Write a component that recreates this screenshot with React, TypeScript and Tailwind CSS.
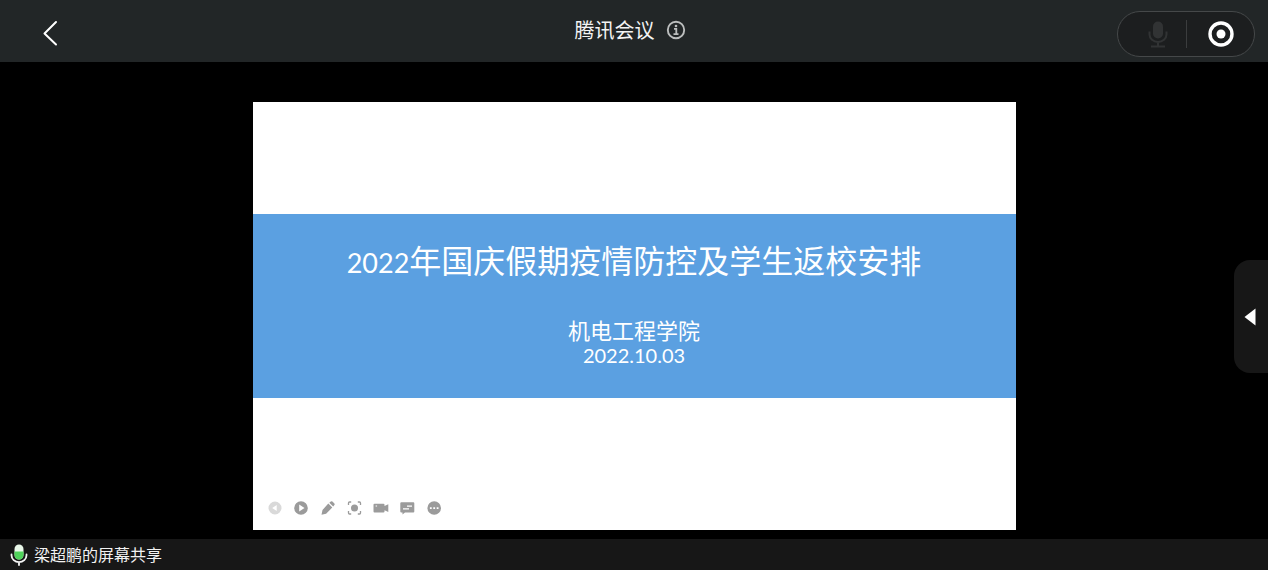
import type { ReactNode } from "react";

function ToolButton({ label, faded, children }: { label: string; faded?: boolean; children: ReactNode }) {
  return (
    <button
      type="button"
      aria-label={label}
      className={faded ? "size-4 text-[#d9d9d9]" : "size-4 text-[#9b9b9b]"}
    >
      <svg viewBox="0 0 16 16" className="size-4" fill="currentColor" aria-hidden="true">
        {children}
      </svg>
    </button>
  );
}

function Header() {
  return (
    <header className="grid h-[62px] shrink-0 grid-cols-[1fr_auto_1fr] items-center bg-[#222627] px-[13px]">
      <button type="button" aria-label="返回" className="mt-1 ml-6 size-7 text-white">
        <svg viewBox="0 0 28 28" className="size-7" fill="none" stroke="currentColor" strokeWidth="2" strokeLinecap="round" strokeLinejoin="round" aria-hidden="true">
          <path d="M19 3 7.500 14.500 19 25.500" />
        </svg>
      </button>
      <div className="flex items-center gap-[11px] pr-2 pb-0.5">
        <h1 className="text-[20px] leading-7 text-[#f4f4f4]">腾讯会议</h1>
        <button type="button" aria-label="会议信息" className="size-5 text-[#bcbebe]">
          <svg viewBox="0 0 20 20" className="size-5" fill="none" stroke="currentColor" strokeWidth="1.900" aria-hidden="true">
            <circle cx="10" cy="10" r="8.200" />
            <path d="M8 8.900h2.300v5M7.500 14.100h5" strokeWidth="1.800" />
            <circle cx="10" cy="6" r="1.300" fill="currentColor" stroke="none" />
          </svg>
        </button>
      </div>
      <div className="mt-1.5 flex h-[46px] w-[138px] items-center justify-self-end rounded-full border border-[#454849] bg-[#1c1e1f]">
        <button type="button" aria-label="麦克风" className="flex w-1/2 justify-center pl-3 text-[#313334]">
          <svg viewBox="0 0 24 30" className="h-[30px] w-6" fill="none" stroke="currentColor" strokeWidth="2" aria-hidden="true">
            <rect x="7" y="2.500" width="10" height="17" rx="5" fill="currentColor" stroke="none" />
            <path d="M3.500 12.500v3a8.500 7.500 0 0 0 17 0v-3M12 22.500v4M5 27.500h14" />
          </svg>
        </button>
        <span className="h-7 w-px shrink-0 bg-[#3b3d3e]" />
        <button type="button" aria-label="退出" className="flex w-1/2 justify-center pl-0.5 text-white">
          <svg viewBox="0 0 26 26" className="size-[26px]" aria-hidden="true">
            <circle cx="13" cy="13" r="11" fill="none" stroke="currentColor" strokeWidth="3.400" />
            <circle cx="13" cy="13" r="4.500" fill="currentColor" />
          </svg>
        </button>
      </div>
    </header>
  );
}

function SlideToolbar() {
  return (
    <div className="ml-[14px] flex w-[175px] items-end justify-between pb-[14px]">
      <ToolButton label="上一页" faded>
        <path fillRule="evenodd" d="M8 1.500a6.500 6.500 0 1 0 0 13 6.500 6.500 0 0 0 0-13ZM9.700 4.900v6.200L5.200 8Z" />
      </ToolButton>
      <ToolButton label="下一页">
        <path fillRule="evenodd" d="M8 1.200a6.800 6.800 0 1 0 0 13.600A6.800 6.800 0 0 0 8 1.200ZM6.200 4.500 11.500 8l-5.300 3.500Z" />
      </ToolButton>
      <ToolButton label="画笔">
        <path d="m8.300 3.500 4 4-6.200 6.200-4.600 1 1-4.800ZM9.300 2.700l1.500-1.200q.8-.6 1.600 0l2 2q.6.8 0 1.600l-1.200 1.500Z" />
      </ToolButton>
      <ToolButton label="聚焦">
        <circle cx="8.500" cy="8" r="3.500" />
        <path fill="none" stroke="currentColor" strokeWidth="1.300" d="M2.500 5V3q0-1 1-1h1.700M11.800 2h1.700q1 0 1 1v2M14.500 11v2q0 1-1 1h-1.700M5.200 14H3.500q-1 0-1-1v-2" />
      </ToolButton>
      <ToolButton label="录像">
        <path fillRule="evenodd" d="M1.500 3.700h9q1 0 1 1v1.200l3.800-1.700v7.700l-3.800-1.700v1.300q0 1-1 1h-9q-1 0-1-1V4.700q0-1 1-1ZM2.600 5.500v1h1.500v-1Z" />
      </ToolButton>
      <ToolButton label="批注">
        <path fillRule="evenodd" d="M2.300 2.200h12q1 0 1 1v8.300q0 1-1 1H6l-2.500 2v-2H2.300q-1 0-1-1V3.200q0-1 1-1ZM8 5.500v1.200h5V5.500ZM4 8.300v1.200h6V8.300Z" />
      </ToolButton>
      <ToolButton label="更多">
        <path fillRule="evenodd" d="M8.200 1.200a6.800 6.800 0 1 0 0 13.600 6.800 6.800 0 0 0 0-13.600ZM3.900 7.200h1.800V9H3.900ZM7.300 7.200h1.800V9H7.300ZM10.700 7.200h1.800V9h-1.800Z" />
      </ToolButton>
    </div>
  );
}

function Slide() {
  return (
    <section className="grid aspect-[763/428] grid-rows-[112fr_184fr_132fr] bg-white">
      <div />
      <div className="flex flex-col items-center justify-center bg-[#5ba0e1] pb-2 text-center font-[Lato,'Noto_Sans_CJK_SC',sans-serif] text-white">
        <h2 className="text-[32px] leading-12">
          <span className="text-[27px]">2022</span>年国庆假期疫情防控及学生返校安排
        </h2>
        <p className="mt-8 text-[22px] leading-6">机电工程学院</p>
        <p className="text-[20px] leading-6">2022.10.03</p>
      </div>
      <SlideToolbar />
    </section>
  );
}

export default function App() {
  return (
    <div className="flex h-screen flex-col bg-black font-['Noto_Sans_CJK_SC',sans-serif]">
      <Header />
      <main className="relative flex min-h-0 flex-1 justify-center pt-10 pb-[9px]">
        <Slide />
        <button
          type="button"
          aria-label="展开侧栏"
          className="absolute top-[198px] right-0 flex h-[113px] w-[34px] items-center rounded-l-2xl bg-[#171717] pl-[10px] text-white"
        >
          <svg viewBox="0 0 12 18" className="h-[18px] w-3" fill="currentColor" aria-hidden="true">
            <path d="M11.500 0.500v17L.5 9Z" />
          </svg>
        </button>
      </main>
      <footer className="flex h-[31px] shrink-0 items-center gap-1 bg-[#171717] pl-2 text-[16px] text-[#f2f2f2]">
        <svg viewBox="0 0 22 22" className="size-[22px]" fill="none" aria-hidden="true">
          <rect x="6.500" y="0.500" width="9" height="15" rx="4.500" fill="#e9f8e9" />
          <path d="M6.500 7.500h9V11a4.500 4.500 0 0 1-9 0Z" fill="#4fd35b" />
          <path d="M3.500 10.500v.7a7.500 7 0 0 0 15 0v-.7M11 18.500v2.500" stroke="#f5f5f5" strokeWidth="1.800" strokeLinecap="round" />
        </svg>
        <span className="pb-0.5">梁超鹏的屏幕共享</span>
      </footer>
    </div>
  );
}
